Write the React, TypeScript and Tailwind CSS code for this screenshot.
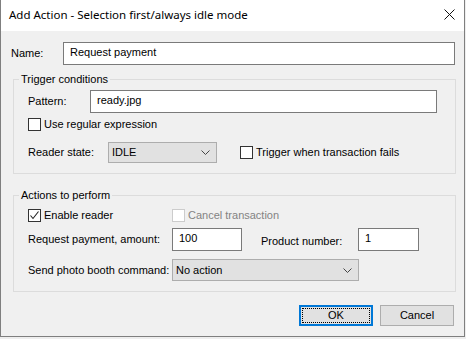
import React from 'react';

const font = { fontFamily: '"Liberation Sans", Arial, sans-serif' };

const Check: React.FC<{ checked?: boolean; disabled?: boolean; label: string }> = ({ checked, disabled, label }) => (
  <div className="flex items-center h-[13px]">
    <div className={`w-[13px] h-[13px] bg-white border ${disabled ? 'border-[#cccccc]' : 'border-[#333333]'} flex items-center justify-center`}>
      {checked && (
        <svg width="11" height="11" viewBox="0 0 11 11">
          <polyline points="1.5,5.5 4,8.5 9.5,1.5" fill="none" stroke="#222" strokeWidth="1.1" />
        </svg>
      )}
    </div>
    <span className={`ml-[3px] ${disabled ? 'text-[#838383]' : 'text-black'}`}>{label}</span>
  </div>
);

const Select: React.FC<{ value: string; className: string }> = ({ value, className }) => (
  <div className={`flex items-center justify-between bg-[#e1e1e1] border border-[#adadad] pl-[3px] pr-[6px] ${className}`}>
    <span>{value}</span>
    <svg width="9" height="5" viewBox="0 0 9 5">
      <polyline points="0.5,0.5 4.5,4.5 8.5,0.5" fill="none" stroke="#444" strokeWidth="1" />
    </svg>
  </div>
);

const Input: React.FC<{ value: string; className: string }> = ({ value, className }) => (
  <div className={`flex items-center bg-white border border-[#7a7a7a] pl-[6px] pb-[2px] ${className}`}>{value}</div>
);

export default function App() {
  return (
    <div className="w-[466px] h-[339px] bg-[#eeeeee] text-[11px] text-black" style={font}>
      <div className="w-[465px] h-[337px] border-x border-b border-[#7f7f7f] flex flex-col">
        {/* Title bar */}
        <div className="h-[31px] bg-white flex items-center justify-between pl-[8px] pr-[8px] shrink-0">
          <span className="text-[11.5px] pb-[1px]" style={{ fontFamily: '"Noto Sans", "Open Sans", sans-serif' }}>
            Add Action - Selection first/always idle mode
          </span>
          <svg width="11" height="11" viewBox="0 0 11 11" className="mr-[1px] mb-[2px]">
            <path d="M0.5 0.5 L10.5 10.5 M10.5 0.5 L0.5 10.5" stroke="#111" strokeWidth="1" />
          </svg>
        </div>

        <div className="flex-1 bg-[#f0f0f0] pl-[10px] pr-[8px]">
          {/* Name */}
          <div className="mt-[11px] flex items-center h-[23px]">
            <span className="w-[52px]">Name:</span>
            <Input value="Request payment" className="w-[392px] h-[23px]" />
          </div>

          {/* Trigger conditions */}
          <fieldset className="mt-[8px] ml-[2px] w-[443px] border border-[#dcdcdc] pl-[14px] pb-[10px]">
            <legend className="-ml-[9px] px-[2px] leading-[13px]">Trigger conditions</legend>
            <div className="mt-[4px] flex items-center h-[23px]">
              <span className="w-[62px]">Pattern:</span>
              <Input value="ready.jpg" className="w-[347px] h-[23px]" />
            </div>
            <div className="mt-[5px]">
              <Check label="Use regular expression" />
            </div>
            <div className="mt-[11px] flex items-center h-[21px]">
              <span className="w-[80px]">Reader state:</span>
              <Select value="IDLE" className="w-[109px] h-[21px]" />
              <div className="ml-[23px]">
                <Check label="Trigger when transaction fails" />
              </div>
            </div>
          </fieldset>

          {/* Actions to perform */}
          <fieldset className="mt-[15px] ml-[2px] w-[443px] border border-[#dcdcdc] pl-[14px] pb-[10px]">
            <legend className="-ml-[9px] px-[2px] leading-[13px]">Actions to perform</legend>
            <div className="mt-[7px] flex">
              <div className="w-[144px]">
                <Check checked label="Enable reader" />
              </div>
              <Check disabled label="Cancel transaction" />
            </div>
            <div className="mt-[6px] flex items-center h-[23px]">
              <span className="w-[144px]">Request payment, amount:</span>
              <Input value="100" className="w-[70px] h-[23px]" />
              <span className="ml-[19px] w-[97px] pt-[3px]">Product number:</span>
              <Input value="1" className="w-[61px] h-[23px]" />
            </div>
            <div className="mt-[8px] flex items-center h-[22px]">
              <span className="w-[144px]">Send photo booth command:</span>
              <Select value="No action" className="w-[187px] h-[22px]" />
            </div>
          </fieldset>

          {/* Buttons */}
          <div className="mt-[13px] flex justify-end pr-[2px] gap-[7px]">
            <div className="w-[74px] h-[21px] bg-[#e1e1e1] border-2 border-[#0078d7] p-[1px]">
              <div className="w-full h-full border border-dotted border-black flex items-center justify-center pb-[1px]">OK</div>
            </div>
            <div className="w-[74px] h-[21px] bg-[#e1e1e1] border border-[#adadad] flex items-center justify-center pb-[1px]">
              Cancel
            </div>
          </div>
        </div>
      </div>
    </div>
  );
}
